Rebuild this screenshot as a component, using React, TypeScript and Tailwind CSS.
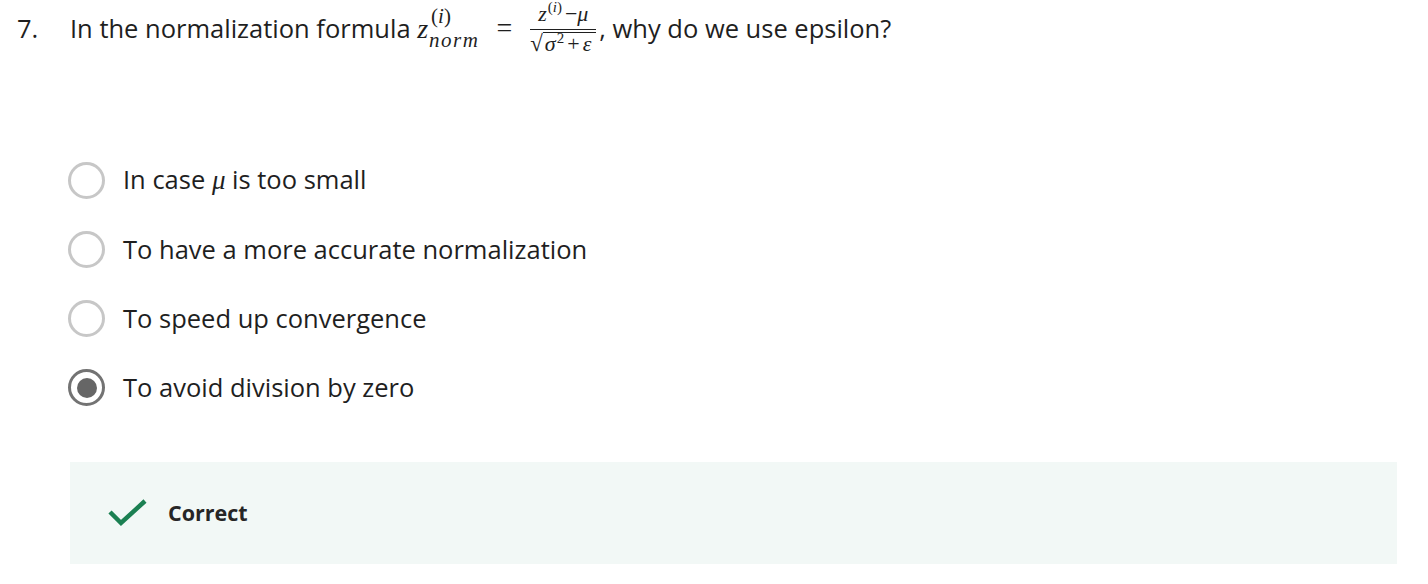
const serif = "font-['Liberation_Serif','DejaVu_Serif',serif]"

function Radio({ checked }: { checked?: boolean }) {
  if (checked) {
    return (
      <span className="flex h-[37px] w-[37px] shrink-0 items-center justify-center rounded-full border-[3px] border-[#737373]">
        <span className="h-[20px] w-[20px] rounded-full bg-[#666666]" />
      </span>
    )
  }
  return <span className="h-[37px] w-[37px] shrink-0 rounded-full border-[3px] border-[#c7c7c7]" />
}

const options = [
  { id: 'a', label: null },
  { id: 'b', label: 'To have a more accurate normalization' },
  { id: 'c', label: 'To speed up convergence' },
  { id: 'd', label: 'To avoid division by zero', checked: true },
]

export default function App() {
  return (
    <div className="min-h-[584px] w-[1428px] bg-white font-['Open_Sans',sans-serif] text-[#1f1f1f]">
      <div className="flex h-[52px] items-center pt-[3px] text-[25.5px] leading-[36px]">
        <span className="w-[70px] pl-[17px]">7.</span>
        <span>In the normalization formula&nbsp;</span>
        {/* z_norm^(i) */}
        <span className={`${serif} inline-flex items-center`}>
          <span className="mt-[2px] text-[28px] italic leading-none">z</span>
          <span className="ml-[1px] flex flex-col gap-[4px] text-[21px] leading-[20px]">
            <span className="pl-[2px]">
              (<i>i</i>)
            </span>
            <span className="tracking-[1.5px] italic">norm</span>
          </span>
        </span>
        <span className={`${serif} ml-[17px] mr-[18px] text-[28px]`}>=</span>
        {/* fraction */}
        <span className={`${serif} mt-[2px] inline-flex flex-col items-center text-[22px] leading-none`}>
          <span className="flex items-start px-[3px] pb-[4px]">
            <i>z</i>
            <span className="-mt-[3px] ml-[1px] text-[15px]">
              (<i>i</i>)
            </span>
            <span className="ml-[3px]">−</span>
            <i>μ</i>
          </span>
          <span className="flex items-start border-t border-[#1f1f1f] pt-[2px]">
            <span className="text-[23px]">√</span>
            <span className="flex items-start border-t border-[#1f1f1f] pl-[2px] pr-[5px]">
              <i>σ</i>
              <span className="-mt-[2px] ml-[1px] text-[15px]">2</span>
              <span className="mx-[3px]">+</span>
              <i>ε</i>
            </span>
          </span>
        </span>
        <span className="ml-[3px]">,&nbsp;why do we use epsilon?</span>
      </div>

      <div className="mt-[109px] flex flex-col gap-[32px] pl-[68px] text-[25.5px] leading-[37px]">
        {options.map((o) => (
          <div key={o.id} className="flex items-center gap-[18px]">
            <Radio checked={o.checked} />
            {o.label ?? (
              <span>
                In case <span className={`${serif} text-[27px] italic`}>μ</span> is too small
              </span>
            )}
          </div>
        ))}
      </div>

      <div className="ml-[70px] mt-[56px] flex h-[102px] w-[1327px] items-center bg-[#f2f8f6] pl-[38px]">
        <svg width="40" height="30" viewBox="0 0 40 30" fill="none">
          <path d="M2 14 L13 25 L37 3" stroke="#1b8052" strokeWidth="4.5" />
        </svg>
        <span className="ml-[20px] text-[21.5px] font-bold text-[#262626]">Correct</span>
      </div>
    </div>
  )
}
